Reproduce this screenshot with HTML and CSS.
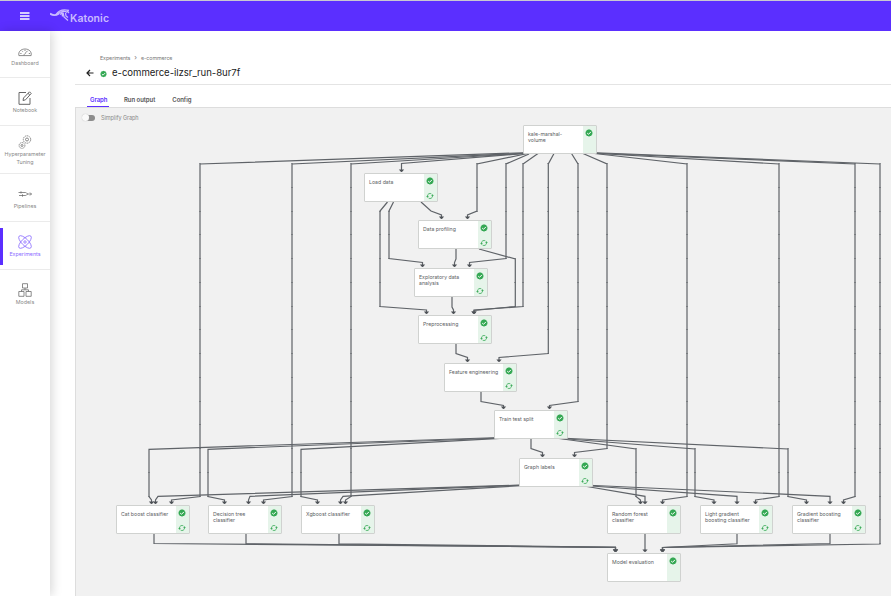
FILE: index.html
```html
<!DOCTYPE html>
<html lang="en">
<head>
<meta charset="utf-8">
<title>Katonic</title>
<link rel="stylesheet" href="styles.css">
</head>
<body>
<svg class="defs" width="0" height="0">
  <symbol id="ok" viewBox="0 0 8 8"><path fill="#34a853" d="M4 .3 5 .8 6.200 .9 6.600 2 7.500 2.900 7.300 4 7.500 5.100 6.600 6 6.200 7 5 7.100 4 7.700 3 7.100 1.800 7 1.400 6 .5 5.100 .7 4 .5 2.900 1.400 2 1.800 .9 3 .8Z"/><path fill="none" stroke="#fff" stroke-width="1" d="M2.200 4.100 3.500 5.300 5.900 2.900"/></symbol>
  <symbol id="cached" viewBox="0 0 8 8"><path fill="none" stroke="#34a853" stroke-width=".8" d="M1.500 5V4A2.500 2.500 0 0 1 5.400 1.900M6.500 3V4A2.500 2.500 0 0 1 2.600 6.100"/><path fill="#34a853" d="M.1 4.200H2.900L1.500 5.800ZM5.100 3.800H7.900L6.500 2.200Z"/></symbol>
</svg>
<header class="topbar">
  <svg class="menu" viewBox="0 0 10 8"><path d="M0 1H9.500M0 4H9.500M0 7H9.500" stroke="#fff" stroke-width="1.300"/></svg>
  <div class="logo">
    <svg viewBox="0 0 22 14" fill="none" stroke="#c9baff"><path stroke-width="1.800" d="M0 5.500C3 8 6 7.500 9 5.500"/><path stroke-width="1.300" d="M6 6.500C9 2 13 .8 19 2.500M8 6C11 3 15 2.500 17 4.500M10 6.500 12 5 12.500 8.500M13 4.500 14 9 18 12.500M15.500 5 16 8 18 9.500M17 3 19 5"/></svg>
    <span>Katonic</span>
  </div>
</header>
<div class="shell">
  <nav class="side">
    <a class="item"><svg viewBox="0 0 14 14"><path d="M.9 11.600C0 7.500 3.200 5 7 5S14 7.500 13.100 11.600ZM6 11.300C6 9.800 7.500 9.500 9.500 6.800M2.300 9.500H3.500M10.800 9.500H12M4 6.800 4.800 7.700M7 6V7"/></svg><span>Dashboard</span></a>
    <a class="item note"><svg viewBox="0 0 14 14"><path d="M8 1.500H1V13.300H12V7M5 9.500 5.500 7 11.500 .8 13.200 2.500 7.500 8.800ZM10 2.300 11.800 4"/></svg><span>Notebook</span></a>
    <a class="item tune"><svg viewBox="0 0 14 14"><circle cx="9" cy="4.500" r="3.700" stroke-dasharray="1.500 .6"/><circle cx="9" cy="4.500" r="1.500"/><circle cx="4" cy="10.500" r="2.900" stroke-dasharray="1.300 .6"/><circle cx="4" cy="10.500" r="1"/></svg><span>Hyperparameter Tuning</span></a>
    <a class="item pipe"><svg viewBox="0 0 14 14"><path d="M.5 5.500H7.500C9 5.500 8.500 7 10 7H13.500M1 8.500H7.500C9 8.500 8.500 7 10 7M3 4.300V6.500M4.500 7.300V9.700M12 5.500 13.500 7 12 8.500"/></svg><span>Pipelines</span></a>
    <a class="item active"><svg viewBox="0 0 14 14"><ellipse cx="7" cy="7" rx="8.300" ry="3.300" transform="rotate(45 7 7)"/><ellipse cx="7" cy="7" rx="8.300" ry="3.300" transform="rotate(-45 7 7)"/><circle cx="7" cy="7" r="1.200"/></svg><span>Experiments</span></a>
    <a class="item"><svg viewBox="0 0 14 14"><path d="M4.500 .7H9.500V5H4.500ZM.8 8.500H6V13.300H.8ZM8 8.500H13.200V13.300H8ZM7 5V6.800M3.500 8.500V6.800H10.500V8.500"/></svg><span>Models</span></a>
  </nav>
  <main class="page">
    <div class="crumbs"><span>Experiments</span><i>›</i><span>e-commerce</span></div>
    <div class="title"><svg class="back" viewBox="0 0 8 8"><path d="M7.500 4H1M4 1 1 4 4 7"/></svg><svg class="state"><use href="#ok"/></svg><h1>e-commerce-ilzsr_run-8ur7f</h1></div>
    <div class="tabs"><span class="tab on">Graph</span><span class="tab out">Run output</span><span class="tab">Config</span></div>
    <section class="graph">
      <label class="simplify"><span class="switch"></span>Simplify Graph</label>
      <svg class="edges" id="edges" viewBox="76 108 815 488"></svg>
      <div class="nodes" id="nodes"></div>
    </section>
  </main>
</div>
<script src="graph.js"></script>
</body>
</html>
```
FILE: styles.css
```css
* { box-sizing: border-box; }
body { margin: 0; width: 891px; height: 596px; overflow: hidden; background: #fff; font-family: Inter, "Liberation Sans", sans-serif; color: #555; }
.defs { position: absolute; }
.topbar { height: 31px; background: #5b2fff; border-top: 1px solid #c9c9d2; display: flex; align-items: center; padding-left: 20px; }
.menu { width: 10px; height: 8px; margin-top: -1px; }
.logo { display: flex; margin-left: 20px; color: #c9baff; }
.logo svg { width: 22px; height: 14px; }
.logo span { font-size: 10.500px; font-weight: 600; line-height: 13px; margin: 4px 0 0 -2px; letter-spacing: .05px; }
.shell { display: flex; height: 565px; }
.side { width: 50px; flex: none; box-shadow: 2px 0 10px rgba(0,0,0,.16); }
.item { height: 48px; border-bottom: 1px solid #ebebeb; display: flex; flex-direction: column; align-items: center; padding-top: 13px; color: #888; font-size: 5.300px; line-height: 8px; text-align: center; }
.item:first-child { height: 47px; }
.item:last-child { border: 0; }
.item svg { width: 14px; height: 14px; fill: none; stroke: #666; stroke-width: .75; overflow: visible; flex: none; margin-bottom: 1px; }
.item.note svg { stroke-width: 1; }
.item.tune { padding-top: 9px; }
.item.active { color: #8a6bff; position: relative; }
.item.active::before { content: ""; position: absolute; left: 0; top: 6px; width: 3px; height: 37px; background: #5b2fff; }
.item.active svg { stroke: #8a6bff; stroke-width: .8; }
.page { flex: 1; padding-left: 25px; }
.crumbs { display: flex; gap: 4px; padding: 23px 0 0 25px; height: 33px; font-size: 5.300px; letter-spacing: -.07px; line-height: 9px; color: #777; }
.crumbs i { font-style: normal; font-size: 7px; line-height: 8px; }
.title { height: 21px; border-bottom: 1px solid #e4e4e4; display: flex; padding-left: 11px; }
.back { width: 8px; height: 8px; margin-top: 5px; fill: none; stroke: #222; stroke-width: 1.200; }
.state { width: 7px; height: 8px; margin: 6px 5px 0 6px; }
h1 { margin: 2px 0 0; font-size: 9.600px; letter-spacing: -.05px; line-height: 13px; font-weight: 400; color: #222; white-space: nowrap; }
.tabs { display: flex; height: 22px; padding-left: 12px; font-size: 6px; font-weight: 600; letter-spacing: -.05px; line-height: 8px; }
.tab { padding: 11px 3px 0; color: #555; white-space: nowrap; }
.tab.on { color: #5b2fff; border-bottom: 1px solid #5b2fff; width: 22px; }
.tab.out { margin: 0 11px 0 12px; }
.graph { position: relative; height: 489px; background: #f1f1f1; border-left: 1px solid #ddd; border-top: 1px solid #ddd; }
.simplify { display: flex; align-items: center; height: 19px; padding-left: 6px; font-size: 5.500px; letter-spacing: -.05px; color: #888; }
.switch { width: 13px; height: 6px; margin-right: 6px; background: linear-gradient(to right, transparent 4px, #8d8d8d 4px); border-radius: 3px; position: relative; }
.switch::before { content: ""; position: absolute; left: 0; top: -1px; width: 7px; height: 7px; border-radius: 50%; background: #fafafa; box-shadow: 0 0 1px #aaa; }
.edges { position: absolute; left: 0; top: 0; width: 815px; height: 488px; }
.line { fill: none; stroke: #5f6368; stroke-width: 1.200; }
.joint { fill: #5f6368; opacity: .55; }
.head { fill: #4d5156; }
.node { position: absolute; height: 29px; border: 1px solid #d0d2d0; border-radius: 1px; background: #fff; display: flex; }
.node p { flex: 1; margin: 0; padding: 5px 0 0 4px; font-size: 5.200px; line-height: 6px; color: #5b5e63; white-space: pre; }
.marks { width: 13px; background: #e6f4ea; display: flex; flex-direction: column; align-items: center; padding: 2.500px 1px 0 0; gap: 7px; flex: none; }
.marks svg { width: 8px; height: 8px; flex: none; }
```
FILE: graph.js
```js
const nodes = [
  [523, 125, 74, "kale-marshal-\nvolume", 0],
  [364, 173, 74, "Load data", 1],
  [418, 220, 74, "Data profiling", 1],
  [414, 268, 74, "Exploratory data\nanalysis", 1],
  [418, 315, 74, "Preprocessing", 1],
  [444, 363, 73, "Feature engineering", 1],
  [494, 410, 74, "Train test split", 1],
  [519, 458, 74, "Graph labels", 1],
  [116, 505, 74, "Cat boost classifier", 1],
  [208, 505, 74, "Decision tree\nclassifier", 1],
  [301, 505, 74, "Xgboost classifier", 1],
  [607, 505, 74, "Random forest\nclassifier", 0],
  [700, 505, 73, "Light gradient\nboosting classifier", 1],
  [792, 505, 74, "Gradient boosting\nclassifier", 1],
  [607, 553, 74, "Model evaluation", 0]
];

// Each edge: start point, bend points, and the arrow tip last.
const edges = [
  "530,152.5 200,164 200,496.5 171.5,500 171.5,504",
  "530,153 292,164 292,496.5 263.5,500 263.5,504",
  "530,153 351,164 351,496.5 345.5,500 345.5,504",
  "530,153 401.5,163.5 401.5,172",
  "530,153 477,164 477,211 467.5,215 467.5,219",
  "529,154 506,164 506,258.5 469.5,262.5 469.5,267",
  "538,153.500 523,164 523,306.5 474,310 474,314",
  "554,153.500 548.3,164 548.3,353.5 499,357.5 499,362",
  "571.5,153.500 578,164 578,401.5 549.5,405.5 549.5,409",
  "583,153.500 607,164 607,448.5 574.5,452.5 574.5,457",
  "590,153 687,164 687,496.5 662.5,500 662.5,504",
  "590,153 779,164 779,496.5 755.5,500 755.5,504",
  "590,153 855,164 855,496.5 843.5,500 843.5,504",
  "590,152.5 880,164 880,544 662.5,547.5 662.5,552",
  "387.5,202 380,211 380,306.5 426.5,310 426.5,314",
  "393.5,202 389,211 389,258.5 422.5,262.5 422.5,267",
  "421,202 431,211 441.5,215 441.5,219",
  "456,249 456,259 454.5,262.5 454.5,267",
  "479,249 515.3,259 515.3,306.5 474,310.500 474,314",
  "452,297 452,307 453.5,310 453.5,314",
  "456,344 456,353.5 467.5,357.5 467.5,362",
  "481,392 481,401.5 503.5,405.5 503.5,409",
  "531,439 531,448.5 542.5,452.5 542.5,457",
  "500,437.5 149,449.3 149,496.5 151.5,500 151.5,504",
  "500,438 208,449.3 208,496.5 224.5,500 224.5,504",
  "500,438.3 301,449.3 301,496.5 317.5,500 317.5,504",
  "559,438.500 636,449 636,496.5 640.5,500 640.5,504",
  "555,438 695,449 695,496.5 714,500 714,504",
  "560,438 788,449 788,496.5 806.5,500 806.5,504",
  "525,485 158,496.3 155.5,500 155.5,504",
  "525,485 250,496.3 248.5,500 248.5,504",
  "525,485.500 343,496.3 340.5,500 340.5,504",
  "584,486 645,496.3 645,504",
  "584,485.500 737,496.3 737,504",
  "584,485 830,496.3 830,504",
  "154,534 154,543.5 615.5,547.3 615.5,552",
  "246,534 246,543.8 615.5,547.3 615.5,552",
  "339,534 339,543.8 615.5,547.3 615.5,552",
  "645,534 645,552",
  "737,534 737,543.8 662.5,547.5 662.5,552",
  "830,534 830,543.5 662.5,547.5 662.5,552"
];

let drawing = "";
for (const edge of edges) {
  drawing += `<polyline class="line" points="${edge}"/>`;
  const pts = edge.split(" ").map(p => p.split(",").map(Number));
  for (let i = 1; i < pts.length; i++) {
    const [x, y] = pts[i], [px, py] = pts[i - 1];
    if (x !== px || y - py < 40) continue;
    for (let k = 0; k < 17; k++) {
      const jy = Math.floor(163.7 + k * 23.75);
      if (jy >= py - 1 && jy <= y) drawing += `<rect class="joint" x="${Math.round(x) - 1}" y="${jy}" width="2" height="1"/>`;
    }
  }
  const [tx, ty] = pts[pts.length - 1];
  drawing += `<path class="head" d="M${tx - 2.6} ${ty - 2.6}h5.2l-1.600 2h-2z"/>`;
}
document.getElementById("edges").innerHTML = drawing;

document.getElementById("nodes").innerHTML = nodes.map(([x, y, w, label, cached]) =>
  `<div class="node" style="left:${x - 76}px;top:${y - 108}px;width:${w}px"><p>${label}</p><div class="marks"><svg><use href="#ok"/></svg>${cached ? '<svg><use href="#cached"/></svg>' : ""}</div></div>`
).join("");
```
